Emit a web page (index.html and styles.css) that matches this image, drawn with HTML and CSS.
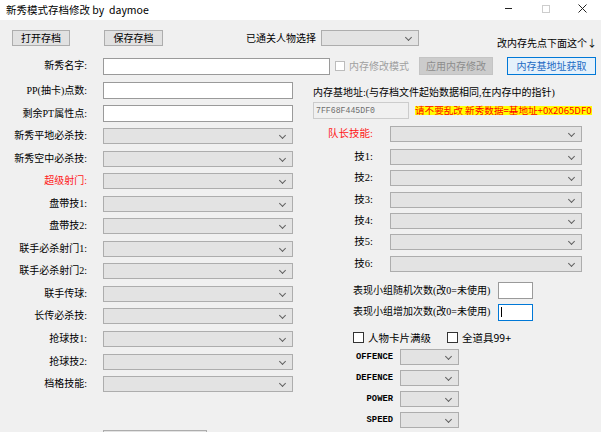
FILE: index.html
```html
<!DOCTYPE html>
<html lang="zh-CN">
<head>
<meta charset="utf-8">
<title>新秀模式存档修改 by daymoe</title>
<link rel="stylesheet" href="styles.css">
</head>
<body>
<div class="window">
  <header class="titlebar">
    <span class="title">新秀模式存档修改 by&nbsp; daymoe</span>
    <div class="controls">
      <span class="ctl"><svg width="9" height="9" viewBox="0 0 9 9"><path d="M1 4.5H8" stroke="#222" stroke-width="1"/></svg></span>
      <span class="ctl"><svg width="9" height="9" viewBox="0 0 9 9"><rect x="1.5" y="1.5" width="7" height="7" fill="none" stroke="#cdcdcd"/></svg></span>
      <span class="ctl"><svg width="9" height="9" viewBox="0 0 9 9"><path d="M0.5 0.5L8.5 8.5M8.5 0.5L0.5 8.5" stroke="#222" stroke-width="1"/></svg></span>
    </div>
  </header>

  <div class="toolbar">
    <button class="btn btn-open">打开存档</button>
    <button class="btn btn-save">保存存档</button>
    <span class="tb-label">已通关人物选择</span>
    <div class="combo combo-char"></div>
    <span class="tb-hint">改内存先点下面这个↓</span>
  </div>

  <div class="name-row">
    <span class="lbl lbl-name">新秀名字:</span>
    <input class="textbox tb-name" type="text">
    <span class="chk chk-disabled"></span>
    <span class="chk-text chk-text-disabled">内存修改模式</span>
    <button class="btn btn-disabled">应用内存修改</button>
    <button class="btn btn-primary">内存基地址获取</button>
  </div>

  <div class="main">
    <div class="left">
      <div class="form">
        <span class="lbl">PP(抽卡)点数:</span><input class="textbox" type="text">
        <span class="lbl">剩余PT属性点:</span><input class="textbox" type="text">
        <span class="lbl">新秀平地必杀技:</span><div class="combo"></div>
        <span class="lbl">新秀空中必杀技:</span><div class="combo"></div>
        <span class="lbl red">超级射门:</span><div class="combo"></div>
        <span class="lbl">盘带技1:</span><div class="combo"></div>
        <span class="lbl">盘带技2:</span><div class="combo"></div>
        <span class="lbl">联手必杀射门1:</span><div class="combo"></div>
        <span class="lbl">联手必杀射门2:</span><div class="combo"></div>
        <span class="lbl">联手传球:</span><div class="combo"></div>
        <span class="lbl">长传必杀技:</span><div class="combo"></div>
        <span class="lbl">抢球技1:</span><div class="combo"></div>
        <span class="lbl">抢球技2:</span><div class="combo"></div>
        <span class="lbl">档格技能:</span><div class="combo"></div>
      </div>
      <div class="cut-row">
        <span class="lbl"></span><div class="combo combo-cut"></div>
      </div>
    </div>

    <div class="right">
      <div class="addr-title">内存基地址:(与存档文件起始数据相同,在内存中的指针)</div>
      <div class="addr-row">
        <input class="textbox tb-addr" type="text" value="7FF68F445DF0" readonly>
        <span class="warn">请不要乱改 新秀数据=基地址+0x2065DF0</span>
      </div>
      <div class="skill-row captain">
        <span class="lbl lbl-skill red">队长技能:</span><div class="combo combo-skill"></div>
      </div>
      <div class="skills">
        <div class="skill-row"><span class="lbl lbl-skill">技1:</span><div class="combo combo-skill"></div></div>
        <div class="skill-row"><span class="lbl lbl-skill">技2:</span><div class="combo combo-skill"></div></div>
        <div class="skill-row"><span class="lbl lbl-skill">技3:</span><div class="combo combo-skill"></div></div>
        <div class="skill-row"><span class="lbl lbl-skill">技4:</span><div class="combo combo-skill"></div></div>
        <div class="skill-row"><span class="lbl lbl-skill">技5:</span><div class="combo combo-skill"></div></div>
        <div class="skill-row"><span class="lbl lbl-skill">技6:</span><div class="combo combo-skill"></div></div>
      </div>
      <div class="perf">
        <div class="perf-row"><span class="lbl perf-text">表现小组随机次数(改0=未使用)</span><input class="textbox tb-small" type="text"></div>
        <div class="perf-row"><span class="lbl perf-text">表现小组增加次数(改0=未使用)</span><div class="textbox tb-small tb-focus"><span class="caret"></span></div></div>
      </div>
      <div class="check-row">
        <span class="chk"></span><span class="chk-text">人物卡片满级</span>
        <span class="chk chk-second"></span><span class="chk-text">全道具99+</span>
      </div>
      <div class="stats">
        <div class="stat-row"><span class="stat-lbl">OFFENCE</span><div class="combo combo-stat"></div></div>
        <div class="stat-row"><span class="stat-lbl">DEFENCE</span><div class="combo combo-stat"></div></div>
        <div class="stat-row"><span class="stat-lbl">POWER</span><div class="combo combo-stat"></div></div>
        <div class="stat-row"><span class="stat-lbl">SPEED</span><div class="combo combo-stat"></div></div>
      </div>
    </div>
  </div>
</div>
</body>
</html>
```

FILE: styles.css
```css
* { box-sizing: border-box; margin: 0; padding: 0; }

html, body {
  width: 601px;
  height: 432px;
  overflow: hidden;
}

body {
  background: #f0f0f0;
  font-family: "Noto Sans CJK SC", "Noto Sans", sans-serif;
  font-size: 10px;
  color: #000;
}

.window {
  width: 601px;
  height: 432px;
  overflow: hidden;
}

/* title bar */
.titlebar {
  height: 20px;
  background: #fff;
  display: flex;
  align-items: flex-start;
}
.title {
  padding-left: 6px;
  font-size: 10.5px;
  line-height: 19px;
  white-space: pre;
}
.controls {
  margin-left: auto;
  display: flex;
  height: 16px;
}
.ctl {
  width: 37px;
  height: 16px;
  display: flex;
  align-items: center;
  justify-content: center;
}
.ctl svg { display: block; }

/* generic controls */
.btn {
  height: 16px;
  background: #e1e1e1;
  border: 1px solid #adadad;
  font: inherit;
  font-size: 10px;
  line-height: 14px;
  color: #000;
  display: flex;
  align-items: center;
  justify-content: center;
}
.combo {
  position: relative;
  height: 16px;
  background: #e3e3e3;
  border: 1px solid #adadad;
}
.combo::after {
  content: "";
  position: absolute;
  right: 7px;
  top: 4px;
  width: 4px;
  height: 4px;
  border-right: 1px solid #606060;
  border-bottom: 1px solid #606060;
  transform: rotate(45deg);
}
.textbox {
  display: block;
  height: 17px;
  background: #fff;
  border: 1px solid #9a9a9a;
  font: inherit;
  outline: none;
}
.chk {
  width: 11px;
  height: 11px;
  background: #fff;
  border: 1px solid #333;
  flex: none;
}
.chk-text {
  margin-left: 4px;
  font-size: 10.5px;
  line-height: 12px;
  white-space: nowrap;
}
.lbl {
  font-family: "Liberation Serif", "Noto Sans CJK SC", serif;
  font-size: 10px;
  line-height: 12px;
  white-space: nowrap;
  text-align: right;
}
.red { color: #ff1a1a; }

/* toolbar */
.toolbar {
  display: flex;
  align-items: flex-start;
  height: 16px;
  margin-top: 10px;
  padding-left: 12px;
}
.btn-open { width: 58px; }
.btn-save { width: 59px; margin-left: 34px; }
.tb-label {
  margin-left: 83px;
  line-height: 16px;
  white-space: nowrap;
}
.combo-char { width: 98px; margin-left: 5px; }
.tb-hint {
  margin-left: auto;
  margin-right: 4px;
  margin-top: 6px;
  line-height: 14px;
  white-space: nowrap;
}

/* name row */
.name-row {
  display: flex;
  align-items: center;
  height: 20px;
  margin-top: 10px;
}
.lbl-name { width: 87px; }
.tb-name { width: 227px; margin-left: 16px; }
.chk-disabled {
  width: 10px;
  height: 10px;
  margin-left: 5px;
  border-color: #bcbcbc;
}
.chk-text-disabled { color: #a0a0a0; font-size: 10px; }
.btn-disabled {
  width: 74px;
  height: 18px;
  margin-left: 10px;
  background: #cccccc;
  border-color: #c4c4c4;
  color: #8c8c8c;
}
.btn-primary {
  width: 89px;
  height: 18px;
  margin-left: 14px;
  background: #e5f1fb;
  border-color: #0078d7;
  color: #1d6bc4;
}

/* main area */
.main {
  display: grid;
  grid-template-columns: 313px 1fr;
  margin-top: 3.7px;
}

.form {
  display: grid;
  grid-template-columns: 87px 190px;
  column-gap: 16px;
  grid-auto-rows: 22.55px;
  align-items: center;
}
.form .textbox { width: 190px; height: 17px; }
.form .combo { width: 190px; }

.cut-row {
  display: grid;
  grid-template-columns: 87px 104px;
  column-gap: 16px;
  margin-top: 35px;
}
.combo-cut::after { display: none; }

/* right column */
.right { display: flex; flex-direction: column; }
.addr-title {
  font-family: "Liberation Serif", "Noto Sans CJK SC", serif;
  height: 14px;
  line-height: 14px;
  margin-top: 6px;
  white-space: nowrap;
}
.addr-row {
  display: flex;
  align-items: center;
  margin-top: 2px;
}
.tb-addr {
  width: 96px;
  height: 17px;
  background: #f0f0f0;
  border-color: #cccccc;
  color: #6d6d6d;
  font-family: "Liberation Mono", monospace;
  font-size: 8.2px;
  padding-left: 2px;
}
.warn {
  display: inline-block;
  margin-left: 6px;
  height: 9px;
  line-height: 9px;
  background: #ffff00;
  color: #ff0000;
  font-size: 9.6px;
  white-space: nowrap;
}

.skill-row {
  display: flex;
  align-items: center;
  height: 16px;
}
.captain { margin-top: 7.3px; }
.lbl-skill { width: 60px; font-size: 10.5px; }
.combo-skill { width: 192px; margin-left: 17px; }
.skills {
  display: flex;
  flex-direction: column;
  row-gap: 5.35px;
  margin-top: 7px;
}

.perf {
  display: flex;
  flex-direction: column;
  row-gap: 4.7px;
  margin-top: 10.6px;
  padding-left: 40px;
}
.perf-row {
  display: flex;
  align-items: center;
  height: 17px;
}
.perf-text { width: 145px; text-align: left; }
.tb-small { width: 35px; height: 17px; }
.tb-focus {
  border-color: #0078d7;
  display: flex;
  align-items: center;
  padding-left: 2px;
}
.caret {
  width: 1px;
  height: 10px;
  background: #000;
}

.check-row {
  display: flex;
  align-items: center;
  height: 12px;
  margin-top: 10.7px;
  padding-left: 40px;
}
.chk-second { margin-left: 16px; }

.stats {
  display: flex;
  flex-direction: column;
  row-gap: 5.1px;
  margin-top: 5.3px;
}
.stat-row {
  display: flex;
  align-items: center;
  height: 16px;
}
.stat-lbl {
  width: 80px;
  text-align: right;
  font-family: "Liberation Mono", monospace;
  font-weight: bold;
  font-size: 8.8px;
  line-height: 12px;
}
.combo-stat { width: 59px; margin-left: 7px; }
```
